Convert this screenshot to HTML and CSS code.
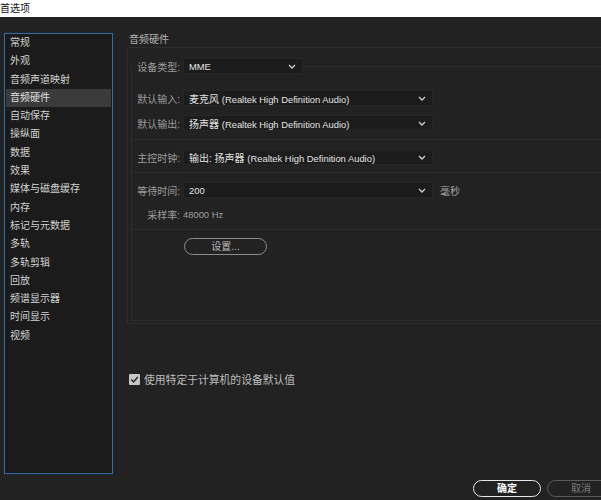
FILE: index.html
```html
<!DOCTYPE html>
<html lang="zh-CN">
<head>
<meta charset="utf-8">
<title>首选项</title>
<link rel="stylesheet" href="styles.css">
</head>
<body>
<div class="titlebar"><span class="title">首选项</span></div>
<div class="main">
  <nav class="sidebar">
    <ul class="nav">
      <li>常规</li>
      <li>外观</li>
      <li>音频声道映射</li>
      <li class="active">音频硬件</li>
      <li>自动保存</li>
      <li>操纵面</li>
      <li>数据</li>
      <li>效果</li>
      <li>媒体与磁盘缓存</li>
      <li>内存</li>
      <li>标记与元数据</li>
      <li>多轨</li>
      <li>多轨剪辑</li>
      <li>回放</li>
      <li>频谱显示器</li>
      <li>时间显示</li>
      <li>视频</li>
    </ul>
  </nav>
  <section class="content">
    <h2 class="heading">音频硬件</h2>
    <div class="outer">
      <fieldset class="inner">
        <legend class="row legend">
          <span class="label">设备类型:</span>
          <span class="select short"><span class="val en">MME</span><svg class="chev" width="8" height="5" viewBox="0 0 8 5"><path d="M1 1 L4 4 L7 1" fill="none" stroke="#cfcfcf" stroke-width="1.3"/></svg></span>
        </legend>
        <div class="row r-in">
          <span class="label">默认输入:</span>
          <span class="select"><span class="val">麦克风 <span class="en">(Realtek High Definition Audio)</span></span><svg class="chev" width="8" height="5" viewBox="0 0 8 5"><path d="M1 1 L4 4 L7 1" fill="none" stroke="#cfcfcf" stroke-width="1.3"/></svg></span>
        </div>
        <div class="row r-out">
          <span class="label">默认输出:</span>
          <span class="select"><span class="val">扬声器 <span class="en">(Realtek High Definition Audio)</span></span><svg class="chev" width="8" height="5" viewBox="0 0 8 5"><path d="M1 1 L4 4 L7 1" fill="none" stroke="#cfcfcf" stroke-width="1.3"/></svg></span>
        </div>
        <div class="group g-clock">
          <div class="row">
            <span class="label">主控时钟:</span>
            <span class="select"><span class="val">输出: 扬声器 <span class="en">(Realtek High Definition Audio)</span></span><svg class="chev" width="8" height="5" viewBox="0 0 8 5"><path d="M1 1 L4 4 L7 1" fill="none" stroke="#cfcfcf" stroke-width="1.3"/></svg></span>
          </div>
        </div>
        <div class="group g-wait">
          <div class="row">
            <span class="label">等待时间:</span>
            <span class="select"><span class="val en">200</span><svg class="chev" width="8" height="5" viewBox="0 0 8 5"><path d="M1 1 L4 4 L7 1" fill="none" stroke="#cfcfcf" stroke-width="1.3"/></svg></span>
            <span class="unit">毫秒</span>
          </div>
          <div class="row r-rate">
            <span class="label">采样率:</span>
            <span class="rate en">48000 Hz</span>
          </div>
        </div>
        <div class="group g-btn">
          <button class="btn setup">设置...</button>
        </div>
      </fieldset>
    </div>
    <label class="check">
      <span class="box"><svg width="11" height="11" viewBox="0 0 11 11"><path d="M2.3 5.6 L4.5 7.9 L8.8 2.9" fill="none" stroke="#2a2a2a" stroke-width="1.5"/></svg></span>
      <span class="check-text">使用特定于计算机的设备默认值</span>
    </label>
  </section>
</div>
<div class="footer">
  <button class="btn ok">确定</button>
  <button class="btn cancel">取消</button>
</div>
</body>
</html>
```
FILE: styles.css
```css
html, body {
  margin: 0;
  padding: 0;
}
body {
  width: 601px;
  height: 500px;
  overflow: hidden;
  background: #222222;
  font-family: "Liberation Sans", "Noto Sans CJK SC", sans-serif;
  font-size: 10px;
  color: #cfcfcf;
}
.titlebar {
  height: 17px;
  background: #ffffff;
  display: flex;
  align-items: center;
}
.title {
  margin-left: 0;
  font-size: 10px;
  color: #111;
  line-height: 17px;
}
.main {
  display: flex;
  height: 456px;
}
.sidebar {
  margin: 16px 0 0 4px;
  width: 107px;
  height: 439px;
  border: 1px solid #3b6a98;
  box-shadow: 0 0 0 1px #1a2836;
  background: #1b1b1b;
  flex: none;
}
.nav {
  list-style: none;
  margin: 0;
  padding: 0 1px;
}
.nav li {
  height: 18.3px;
  line-height: 18.3px;
  padding-left: 4px;
  color: #d2d2d2;
  font-size: 10px;
  white-space: nowrap;
}
.nav li.active {
  background: #3b3b3b;
  color: #e0e0e0;
}
.content {
  margin-left: 14px;
  padding-top: 16px;
  width: 520px;
  flex: none;
}
.heading {
  margin: 0 0 0 2px;
  font-size: 10px;
  font-weight: normal;
  line-height: 14px;
  height: 14px;
  color: #b4b4b4;
}
.outer {
  border: 1px solid #2d2d2d;
  padding: 10px 0 2px 3px;
}
.inner {
  margin: 0;
  padding: 0 0 65px 0;
  border: 1px solid #2d2d2d;
  border-right: none;
  min-width: 0;
}
.legend {
  padding: 0;
  margin: 0;
}
.row {
  display: flex;
  align-items: center;
  height: 16px;
}
.label {
  width: 48px;
  margin-right: 3px;
  text-align: right;
  color: #9c9c9c;
  white-space: nowrap;
  flex: none;
}
.select {
  width: 250px;
  height: 16px;
  box-sizing: border-box;
  background: #1c1c1c;
  border: 1px solid #262626;
  display: flex;
  align-items: center;
  justify-content: space-between;
  padding: 0 6px 0 5px;
  flex: none;
}
.select.short {
  width: 120px;
}
.val {
  color: #e2e2e2;
  white-space: nowrap;
}
.en {
  font-size: 9.4px;
}
.chev {
  flex: none;
}
.r-in {
  margin-top: 16px;
}
.r-out {
  margin-top: 9px;
}
.group {
  border-top: 1px solid #2d2d2d;
}
.g-clock {
  margin-top: 8px;
  padding-top: 9px;
}
.g-wait {
  margin-top: 7px;
  padding-top: 9px;
}
.g-btn {
  margin-top: 7px;
  padding-top: 8px;
  padding-left: 52px;
}
.unit {
  margin-left: 7px;
  color: #a8a8a8;
}
.r-rate {
  margin-top: 8px;
}
.rate {
  color: #a0a0a0;
}
.btn {
  font-family: "Liberation Sans", "Noto Sans CJK SC", sans-serif;
  font-size: 10px;
  background: transparent;
  border-radius: 9px;
  height: 17px;
  padding: 0;
  line-height: 13px;
  flex: none;
}
.setup {
  width: 83px;
  border: 1.5px solid #8c8c8c;
  color: #b8b8b8;
}
.check {
  display: flex;
  align-items: center;
  margin-top: 47px;
  margin-left: 2px;
}
.box {
  width: 11px;
  height: 11px;
  background: #c6c6c6;
  border-radius: 1px;
  display: flex;
}
.check-text {
  margin-left: 4px;
  font-size: 10.8px;
  color: #bdbdbd;
}
.footer {
  display: flex;
  padding: 7px 0 0 473px;
  gap: 6px;
}
.ok {
  width: 68px;
  border: 1.5px solid #e8e8e8;
  color: #ffffff;
  font-weight: bold;
}
.cancel {
  width: 68px;
  border: 1.5px solid #5c5c5c;
  color: #7a7a7a;
}
```
